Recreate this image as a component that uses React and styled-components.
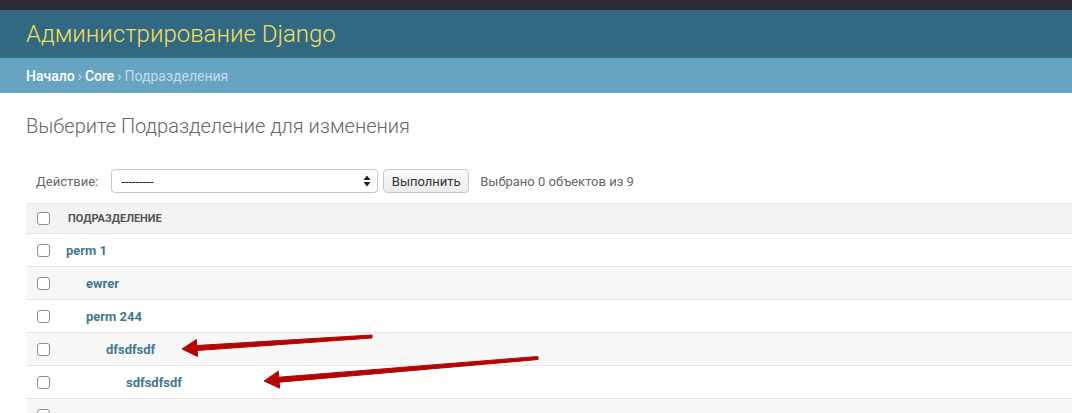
import React from "react";
import styled, { createGlobalStyle } from "styled-components";

const Global = createGlobalStyle`
  html, body { margin: 0; padding: 0; background: #fff; }
  body { font-family: Roboto, "Noto Sans", "Liberation Sans", sans-serif; color: #333; overflow: hidden; }
  * { box-sizing: border-box; }
`;

const Page = styled.div`
  position: relative;
  width: 1072px;
  height: 413px;
  overflow: hidden;
`;

const TopBar = styled.div`
  height: 10px;
  background: #2c2d32;
  border-bottom: 1px solid #22303a;
`;

const Header = styled.header`
  height: 48px;
  background: #316983;
  display: flex;
  align-items: center;
  padding: 0 26px;
`;

const SiteName = styled.h1`
  margin: 0;
  font-size: 24px;
  font-weight: 300;
  color: #f5dd5d;
  line-height: 1;
`;

const Breadcrumbs = styled.nav`
  height: 35px;
  background: #67a4c1;
  border-bottom: 1px solid #6ea9c4;
  display: flex;
  align-items: center;
  padding: 2px 26px 0;
  font-size: 14px;
  color: #c4dce8;
`;

const Crumb = styled.a`
  color: #fff;
  font-weight: 500;
  text-decoration: none;
`;

const Sep = styled.span`
  margin: 0 3px;
  color: #c4dce8;
`;

const Content = styled.main`
  padding: 21px 0 0 26px;
`;

const Title = styled.h2`
  margin: 0;
  font-size: 20px;
  line-height: 24px;
  font-weight: 300;
  color: #666;
`;

const Actions = styled.div`
  margin-top: 25px;
  height: 36px;
  display: flex;
  align-items: center;
  padding-left: 10px;
  font-size: 13px;
  color: #666;
`;

const Label = styled.label`
  margin-right: 13px;
`;

const Select = styled.div`
  width: 267px;
  height: 24px;
  border: 1px solid #c8c8c8;
  border-radius: 4px;
  display: flex;
  align-items: center;
  justify-content: space-between;
  padding: 0 6px 0 9px;
  color: #222;
  font-size: 13px;
  background: #fff;
`;

const Button = styled.button`
  margin-left: 5px;
  height: 24px;
  width: 86px;
  padding: 0;
  border: 1px solid #c8c8c8;
  border-radius: 4px;
  background: linear-gradient(#fafafa, #ececec);
  font-family: inherit;
  font-size: 13px;
  color: #333;
`;

const Counter = styled.span`
  margin-left: 11px;
  color: #666;
`;

const Table = styled.div`
  margin-top: 4px;
  width: 100%;
`;

const Row = styled.div`
  display: flex;
  align-items: center;
  height: ${p => (p.$head ? 30 : 33)}px;
  background: ${p => (p.$head ? "#f3f3f3" : p.$alt ? "#f7f7f7" : "#fff")};
  border-top: 1px solid #e6e6e6;
`;

const CheckCell = styled.div`
  width: 40px;
  padding-left: 11px;
  display: flex;
  align-items: center;
`;

const Box = styled.span`
  display: block;
  width: 13px;
  height: 13px;
  border: 1px solid #8f8f8f;
  border-radius: 3px;
  background: #fff;
`;

const HeadLabel = styled.div`
  padding-left: 2px;
  font-size: 11px;
  font-weight: 700;
  text-transform: uppercase;
  color: #555;
`;

const NameLink = styled.a`
  padding-left: ${p => p.$level * 20}px;
  font-size: 13px;
  font-weight: 700;
  color: #427792;
  text-decoration: none;
`;

const Overlay = styled.svg`
  position: absolute;
  left: 0;
  top: 0;
  pointer-events: none;
`;

const rows = [
  { name: "perm 1", level: 0 },
  { name: "ewrer", level: 1 },
  { name: "perm 244", level: 1 },
  { name: "dfsdfsdf", level: 2 },
  { name: "sdfsdfsdf", level: 3 },
  { name: "wwwwww", level: 0 },
];

function SelectArrows() {
  return (
    <svg width="8" height="12" viewBox="0 0 8 12">
      <path d="M4 0.5 L7.5 5 H0.5 Z" fill="#222" />
      <path d="M4 11.5 L7.5 7 H0.5 Z" fill="#222" />
    </svg>
  );
}

export default function App() {
  return (
    <Page>
      <Global />
      <TopBar />
      <Header>
        <SiteName>Администрирование Django</SiteName>
      </Header>
      <Breadcrumbs>
        <Crumb>Начало</Crumb>
        <Sep>›</Sep>
        <Crumb>Core</Crumb>
        <Sep>›</Sep>
        <span>Подразделения</span>
      </Breadcrumbs>
      <Content>
        <Title>Выберите Подразделение для изменения</Title>
        <Actions>
          <Label>Действие:</Label>
          <Select>
            <span>---------</span>
            <SelectArrows />
          </Select>
          <Button>Выполнить</Button>
          <Counter>Выбрано 0 объектов из 9</Counter>
        </Actions>
        <Table>
          <Row $head>
            <CheckCell><Box /></CheckCell>
            <HeadLabel>Подразделение</HeadLabel>
          </Row>
          {rows.map((r, i) => (
            <Row key={i} $alt={i % 2 === 1}>
              <CheckCell><Box /></CheckCell>
              <NameLink $level={r.level}>{r.name}</NameLink>
            </Row>
          ))}
        </Table>
      </Content>
      <Overlay width="1072" height="413" viewBox="0 0 1072 413">
        <polygon
          points="372,335 196.8,345.5 196.4,339.5 182,349 197.6,356.5 197.2,350.5 372,338"
          fill="#b20606"
          stroke="#b20606"
          strokeWidth="1"
          strokeLinejoin="round"
        />
        <polygon
          points="537.9,356.5 278.8,377.2 278.3,371.2 264,381 279.7,388.2 279.2,382.2 538.1,359.5"
          fill="#b20606"
          stroke="#b20606"
          strokeWidth="1"
          strokeLinejoin="round"
        />
      </Overlay>
    </Page>
  );
}
